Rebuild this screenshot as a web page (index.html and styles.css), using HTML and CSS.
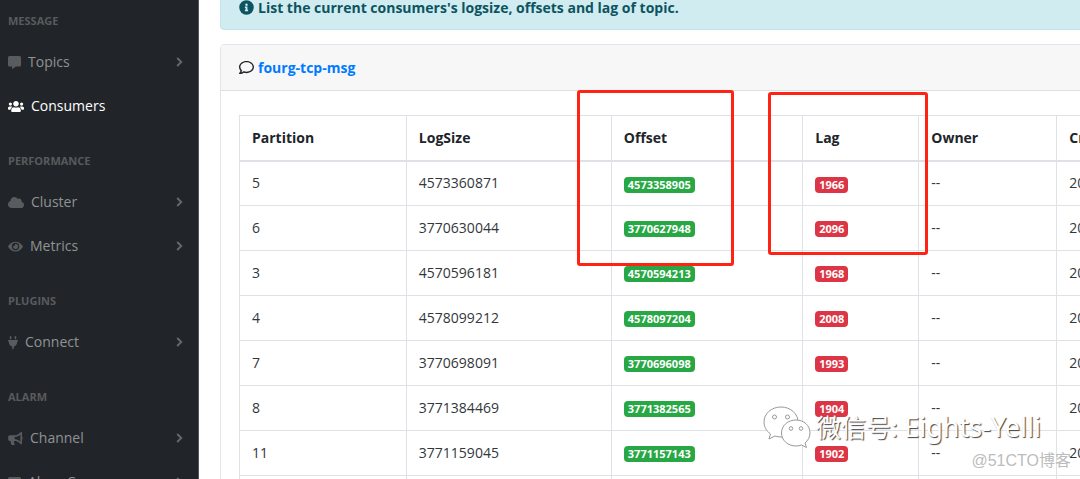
FILE: index.html
```html
<!DOCTYPE html>
<html lang="en">
<head>
<meta charset="utf-8">
<title>Consumers</title>
<link rel="stylesheet" href="styles.css">
</head>
<body>
<div class="layout">
  <nav class="sidebar" aria-label="Main">
    <div class="menu">
      <h2 class="menu-heading">MESSAGE</h2>
      <a class="menu-link" href="#">
        <svg class="icon" viewBox="0 0 512 512" width="13" height="13"><path d="M448 0H64C29 0 0 29 0 64v288c0 35 29 64 64 64h96v84c0 10 11 15 19 10l125-94h144c35 0 64-29 64-64V64c0-35-29-64-64-64z"/></svg>
        <span class="menu-text">Topics</span>
        <svg class="chevron" viewBox="0 0 7 10" width="7" height="10"><path d="M1.2 1l4 4-4 4"/></svg>
      </a>
      <a class="menu-link active" href="#">
        <svg class="icon" viewBox="0 0 640 512" width="16" height="13"><path d="M96 224c35 0 64-29 64-64s-29-64-64-64-64 29-64 64 29 64 64 64zm448 0c35 0 64-29 64-64s-29-64-64-64-64 29-64 64 29 64 64 64zm32 32h-64c-18 0-34 7-45 19 40 22 69 62 75 109h66c18 0 32-14 32-32v-32c0-35-29-64-64-64zm-256 0c62 0 112-50 112-112S382 32 320 32 208 82 208 144s50 112 112 112zm77 32h-8c-42 20-96 20-138 0h-8c-64 0-115 52-115 115v29c0 26 21 48 48 48h288c27 0 48-22 48-48v-29c0-63-51-115-115-115zm-224-13c-11-12-27-19-45-19H64c-35 0-64 29-64 64v32c0 18 14 32 32 32h66c6-47 35-87 75-109z"/></svg>
        <span class="menu-text">Consumers</span>
      </a>
      <h2 class="menu-heading">PERFORMANCE</h2>
      <a class="menu-link" href="#">
        <svg class="icon" viewBox="0 0 640 512" width="16" height="13"><path d="M538 227c4-11 6-23 6-35 0-53-43-96-96-96-20 0-38 6-53 16-28-48-79-80-139-80-88 0-160 72-160 160v8C40 220 0 273 0 336c0 80 64 144 144 144h368c71 0 128-57 128-128 0-62-44-114-102-125z"/></svg>
        <span class="menu-text">Cluster</span>
        <svg class="chevron" viewBox="0 0 7 10" width="7" height="10"><path d="M1.2 1l4 4-4 4"/></svg>
      </a>
      <a class="menu-link" href="#">
        <svg class="icon" viewBox="0 0 576 512" width="15" height="13"><path d="M573 241C518 136 411 64 288 64S58 136 3 241a32 32 0 0 0 0 30c55 105 162 177 285 177s230-72 285-177a32 32 0 0 0 0-30zM288 400a144 144 0 1 1 0-288 144 144 0 0 1 0 288zm0-240c-9 0-17 1-25 4a48 48 0 0 1-67 67 96 96 0 1 0 92-71z"/></svg>
        <span class="menu-text">Metrics</span>
        <svg class="chevron" viewBox="0 0 7 10" width="7" height="10"><path d="M1.2 1l4 4-4 4"/></svg>
      </a>
      <h2 class="menu-heading">PLUGINS</h2>
      <a class="menu-link" href="#">
        <svg class="icon" viewBox="0 0 384 512" width="10" height="13"><path d="M320 32a32 32 0 0 0-64 0v96h64zm48 128H16c-9 0-16 7-16 16v32c0 9 7 16 16 16h16v32c0 77 55 142 128 157v99h64v-99c73-15 128-80 128-157v-32h16c9 0 16-7 16-16v-32c0-9-7-16-16-16zM128 32a32 32 0 0 0-64 0v96h64z"/></svg>
        <span class="menu-text">Connect</span>
        <svg class="chevron" viewBox="0 0 7 10" width="7" height="10"><path d="M1.2 1l4 4-4 4"/></svg>
      </a>
      <h2 class="menu-heading">ALARM</h2>
      <a class="menu-link" href="#">
        <svg class="icon" viewBox="0 0 576 512" width="15" height="13"><path d="M576 240c0-24-13-44-32-55V32c0-9-7-32-32-32-7 0-14 2-20 7l-85 68c-43 34-96 53-151 53H64c-35 0-64 29-64 64v96c0 35 29 64 64 64h34c-2 10-2 21-2 32 0 40 9 77 26 110 5 11 17 18 29 18h74c26 0 42-30 26-51a127 127 0 0 1-20-109h25c55 0 108 19 151 53l85 68c6 5 13 7 20 7 25 0 32-22 32-32V295c19-11 32-31 32-55zm-96 141l-33-26c-54-43-122-67-191-67v-96c69 0 137-24 191-67l33-26z"/></svg>
        <span class="menu-text">Channel</span>
        <svg class="chevron" viewBox="0 0 7 10" width="7" height="10"><path d="M1.2 1l4 4-4 4"/></svg>
      </a>
      <a class="menu-link" href="#">
        <svg class="icon" viewBox="0 0 13 13" width="13" height="13"><rect y="1" width="13" height="11" rx="1.5"/></svg>
        <span class="menu-text">AlarmConsumer</span>
        <svg class="chevron" viewBox="0 0 7 10" width="7" height="10"><path d="M1.2 1l4 4-4 4"/></svg>
      </a>
    </div>
  </nav>

  <main class="content">
    <div class="alert">
      <svg class="icon" viewBox="0 0 512 512" width="15" height="15"><path d="M256 8a248 248 0 1 0 0 496 248 248 0 0 0 0-496zm0 110a42 42 0 1 1 0 84 42 42 0 0 1 0-84zm56 254c0 7-5 12-12 12h-88c-7 0-12-5-12-12v-24c0-7 5-12 12-12h12v-64h-12c-7 0-12-5-12-12v-24c0-7 5-12 12-12h64c7 0 12 5 12 12v100h12c7 0 12 5 12 12z"/></svg>
      <strong>List the current consumers's logsize, offsets and lag of topic.</strong>
    </div>

    <section class="card">
      <header class="card-header">
        <svg class="icon" viewBox="0 0 512 512" width="15" height="15"><path d="M256 32C115 32 0 125 0 240c0 48 20 91 53 127-15 39-46 73-46 73-7 7-9 17-5 26s12 14 22 14c61 0 110-26 139-46 29 9 60 14 93 14 141 0 256-93 256-208S397 32 256 32zm0 368c-27 0-53-4-78-12l-23-7-20 14c-14 10-34 22-58 29 7-12 14-26 20-40l11-28-21-22C69 314 48 282 48 240c0-88 93-160 208-160s208 72 208 160-93 160-208 160z"/></svg>
        <a class="topic-link" href="#">fourg-tcp-msg</a>
      </header>
      <div class="card-body">
        <table class="offsets">
          <colgroup><col class="col-partition"><col class="col-logsize"><col class="col-offset"><col class="col-lag"><col class="col-owner"><col class="col-created"></colgroup>
          <thead>
            <tr><th>Partition</th><th>LogSize</th><th>Offset</th><th>Lag</th><th>Owner</th><th>Created</th></tr>
          </thead>
          <tbody>
            <tr><td>5</td><td>4573360871</td><td><span class="badge green">4573358905</span></td><td><span class="badge red">1966</span></td><td>--</td><td>2020</td></tr>
            <tr><td>6</td><td>3770630044</td><td><span class="badge green">3770627948</span></td><td><span class="badge red">2096</span></td><td>--</td><td>2020</td></tr>
            <tr><td>3</td><td>4570596181</td><td><span class="badge green">4570594213</span></td><td><span class="badge red">1968</span></td><td>--</td><td>2020</td></tr>
            <tr><td>4</td><td>4578099212</td><td><span class="badge green">4578097204</span></td><td><span class="badge red">2008</span></td><td>--</td><td>2020</td></tr>
            <tr><td>7</td><td>3770698091</td><td><span class="badge green">3770696098</span></td><td><span class="badge red">1993</span></td><td>--</td><td>2020</td></tr>
            <tr><td>8</td><td>3771384469</td><td><span class="badge green">3771382565</span></td><td><span class="badge red">1904</span></td><td>--</td><td>2020</td></tr>
            <tr><td>11</td><td>3771159045</td><td><span class="badge green">3771157143</span></td><td><span class="badge red">1902</span></td><td>--</td><td>2020</td></tr>
            <tr><td></td><td></td><td></td><td></td><td></td><td></td></tr>
          </tbody>
        </table>
      </div>
    </section>
  </main>

  <div class="marker marker-offset"></div>
  <div class="marker marker-lag"></div>
  <div class="wechat">
    <svg viewBox="0 0 48 42" width="48" height="42"><path d="M18 1C8.500 1 1 7.500 1 16c0 5 2.500 9 6.500 12L6 33l6-3c2 .6 4 1 6 1 9 0 17-7 17-15S28 1 18 1z"/><path d="M33 14c-8 0-14.500 5.500-14.500 13S25 40 33 40c2 0 4-.4 5.500-1l5 2.500-1.500-4.500c3-2.500 5-6 5-10 0-7.500-6-13-14-13z"/><circle cx="11.500" cy="11" r="2"/><circle cx="24.500" cy="11" r="2"/><circle cx="28" cy="22.500" r="1.800"/><circle cx="38" cy="22.500" r="1.800"/></svg>
    <span>微信号: <span class="account">Eights-Yelli</span></span>
  </div>
  <div class="credit">@51CTO博客</div>
</div>
</body>
</html>
```
FILE: styles.css
```css
* { box-sizing: border-box; }

body {
  margin: 0;
  height: 100vh;
  overflow: hidden;
  background: #fff;
  color: #212529;
  font: 14px/20px "Open Sans", "Noto Sans", "Noto Sans CJK SC", sans-serif;
}

.layout { position: relative; display: flex; height: 100%; overflow: hidden; }

.icon { flex: none; fill: currentColor; }

/* Sidebar */
.sidebar { flex: none; width: 199px; background: #212529; border-right: 1px solid #51565a; overflow: hidden; }
.menu { margin-top: -12px; }
.menu-heading { margin: 0; padding: 26px 8px 12px; color: #585b5e; font-size: 11px; line-height: 14px; font-weight: 700; }
.menu-link { display: flex; align-items: center; gap: 7px; height: 44px; padding: 0 15px 0 8px; color: #909294; text-decoration: none; }
.menu-link .icon { color: #595c5f; }
.menu-link.active, .menu-link.active .icon { color: #fff; }
.menu-text { flex: 1; }
.chevron { fill: none; stroke: #64676a; stroke-width: 2; }

/* Main column */
.content { flex: 1; min-width: 0; padding-left: 21px; }
.alert {
  display: flex;
  align-items: center;
  gap: 4px;
  height: 45px;
  margin: -15px -8px 14px 0;
  padding: 0 18px;
  border: 1px solid #bee5eb;
  border-radius: 4px;
  background: #d1ecf1;
  color: #0c5460;
}
.card { margin-right: -8px; border: 1px solid #e3e4ee; border-radius: 4px; }
.card-header { display: flex; align-items: center; gap: 4px; height: 46px; padding: 0 18px; border-bottom: 1px solid #dfdfdf; background: #f7f7f7; }
.topic-link { color: #007bff; font-weight: 700; text-decoration: none; }
.card-body { padding: 24px 0 0 18px; }

.offsets { width: 100%; border-collapse: collapse; table-layout: fixed; white-space: nowrap; }
.col-partition { width: 19.700%; }
.col-logsize { width: 24.200%; }
.col-offset { width: 22.600%; }
.col-lag { width: 13.700%; }
.col-owner { width: 16.300%; }
.offsets th, .offsets td { height: 45px; padding: 0 12px; border: 1px solid #dee2e6; text-align: left; overflow: hidden; }
.offsets thead th { border-bottom-width: 2px; font-weight: 700; }
.offsets tbody td { color: #33373b; }

.badge { display: inline-block; padding: 0 4px; border-radius: 4px; color: #fff; font-size: 11px; line-height: 16px; font-weight: 700; vertical-align: middle; }
.green { background: #28a745; }
.red { background: #dc3545; }

/* Annotations over the page */
.marker { position: absolute; border: 3px solid #ff2316; border-radius: 3px; }
.marker-offset { left: 577px; top: 90px; width: 157px; height: 176px; }
.marker-lag { left: 768px; top: 92px; width: 160px; height: 163px; }

.wechat {
  position: absolute;
  left: 763px;
  top: 406px;
  display: flex;
  align-items: center;
  gap: 5px;
  color: #fff;
  font: 25px/42px "Noto Sans", "Noto Sans CJK SC", sans-serif;
  text-shadow: 1px 1px 1px #444;
  white-space: nowrap;
}
.account { font-size: 27px; }
.wechat svg { fill: #fff; stroke: #999; stroke-width: 1; }
.credit { position: absolute; right: 9px; bottom: 8px; color: #bcbcbc; font: 16px/20px "Liberation Sans", "Noto Sans CJK SC", sans-serif; }
```
